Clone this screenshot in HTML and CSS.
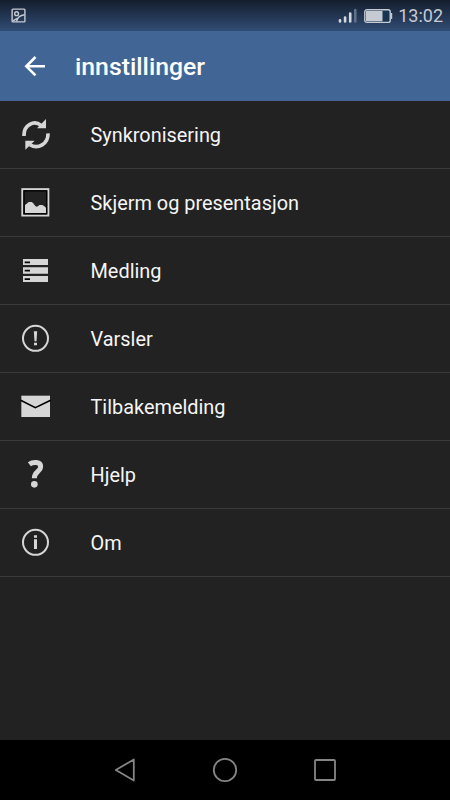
FILE: index.html
```html
<!DOCTYPE html>
<html lang="nb">
<head>
<meta charset="utf-8">
<title>innstillinger</title>
<link rel="stylesheet" href="styles.css">
</head>
<body>
<div class="screen">
  <div class="status">
    <svg class="status-photo" width="16" height="16" viewBox="0 0 16 16"><rect x="1.1" y="1.1" width="12.8" height="12.8" rx=".8"/><circle cx="5.6" cy="5.7" r="1.9"/><path d="M5.5 13.5C6.3 10 8.8 7.3 13.5 6.8M2 12.8L6.3 10.3"/></svg>
    <svg class="signal" width="20" height="16" viewBox="0 0 20 16"><path d="M2 13.500V12.300M7.100 13.500V9.500M12.200 13.500V5.500"/><path class="dim" d="M17.300 13.500V2"/></svg>
    <svg class="battery" width="29" height="15" viewBox="0 0 29 15"><rect class="shell" x=".8" y=".8" width="25.4" height="12.6" rx="2"/><rect class="level" x="2" y="2" width="16.5" height="10.3"/><path class="level" d="M26.5 4h1.7v6h-1.7z"/></svg>
    <span class="clock">13:02</span>
  </div>
  <header class="bar">
    <svg class="back" width="22" height="22" viewBox="0 0 22 22"><path d="M21 11.3H2.5M11.5 2L2.3 11.3L11.5 20.4"/></svg>
    <h1>innstillinger</h1>
  </header>
  <ul class="list">
    <li><svg viewBox="0 0 150 150"><path class="sync" d="M42 78V75C42 45 72 29 93 46M114 70C115 101 84 120 60 104"/><path class="fill" d="M108 27V55H81ZM46 92H74L46 119Z"/></svg><span>Synkronisering</span></li>
    <li><svg viewBox="0 0 150 150"><rect class="frame" x="37" y="33.5" width="78" height="79"/><rect class="inset" x="42" y="38.5" width="68" height="69"/><path class="fill" d="M45 105V81L52 76L56 72H65L70 76L74 82L79 86L84 85L88 81H97L103 85L108 89V105Z"/></svg><span>Skjerm og presentasjon</span></li>
    <li><svg viewBox="0 0 150 150"><path class="fill" d="M39 39H114V57H39ZM39 64H114V83H39ZM39 90H114V108H39Z"/><path class="slot" d="M44 49H60M44 74H60M44 99.5H60"/></svg><span>Medling</span></li>
    <li><svg viewBox="0 0 150 150"><circle class="ring" cx="76.5" cy="73" r="37.5"/><path class="fill" d="M71.5 52H81.5L79.5 82H73.5ZM72 86H81V94H72Z"/></svg><span>Varsler</span></li>
    <li><svg viewBox="0 0 150 150"><rect class="fill" x="34" y="41" width="86" height="64"/><path class="flap" d="M32 55L76 77L122 55"/></svg><span>Tilbakemelding</span></li>
    <li><svg viewBox="0 0 150 150"><path class="query" d="M58 43C70 34 92 35 92 50C92 65 73 64 73 85"/><circle class="fill" cx="73" cy="103" r="10"/></svg><span>Hjelp</span></li>
    <li><svg viewBox="0 0 150 150"><circle class="ring" cx="76.5" cy="73" r="37.5"/><path class="fill" d="M72 52H81V59H72ZM72 64H81V93H72Z"/></svg><span>Om</span></li>
  </ul>
  <nav class="nav">
    <svg viewBox="0 0 30 30"><path d="M23.8 4.5V25.5L5.8 15Z"/></svg>
    <svg viewBox="0 0 30 30"><circle cx="15" cy="15" r="11.2"/></svg>
    <svg viewBox="0 0 30 30"><rect x="5" y="5" width="20" height="20" rx="1"/></svg>
  </nav>
</div>
</body>
</html>
```
FILE: styles.css
```css
* { box-sizing: border-box; }
body { margin: 0; background: #222; font-family: Roboto, sans-serif; color: #f5f5f5; }
.screen { width: 450px; height: 800px; display: flex; flex-direction: column; background: #222; }
svg { flex: none; fill: none; }

.status {
  height: 31px; display: flex; align-items: center; padding: 1px 7px 0 11px;
  background: linear-gradient(#141d2d, #314d75);
}
.status-photo { stroke: #c6cad2; stroke-width: 1.4; margin-right: auto; }
.signal { stroke: #d3d7de; stroke-width: 2.6; stroke-linecap: round; margin-right: 6px; }
.signal .dim { stroke: #61708a; }
.battery { margin-right: 5px; }
.battery .shell { stroke: #c6cad2; stroke-width: 1.4; fill: #183453; }
.battery .level { fill: #c6cad2; }
.clock { font-size: 18px; line-height: 20px; color: #c6cad2; }

.bar { height: 70px; display: flex; align-items: center; padding-left: 24px; background: #416696; }
.back { stroke: #fff; stroke-width: 2.6; margin-right: 29px; }
h1 { margin: 2px 0 0; font-size: 24.8px; line-height: 30px; font-weight: 500; color: #fff; }

.list { flex: 1; margin: 0; padding: 0; list-style: none; }
.list li {
  height: 68px; display: flex; align-items: center; padding: 1px 0 0 10px;
  border-bottom: 1px solid #3b3b3b; font-size: 19.9px; line-height: 24px;
}
.list svg { width: 50px; height: 50px; margin-right: 30.5px; }
.list span { padding-top: 2px; }
.fill { fill: #d6d6d6; }
.sync { stroke: #d6d6d6; stroke-width: 11; }
.frame { stroke: #d6d6d6; stroke-width: 6; }
.inset { stroke: #000; stroke-width: 4; }
.slot { stroke: #050505; stroke-width: 5; }
.ring { stroke: #d6d6d6; stroke-width: 6; }
.flap { stroke: #000; stroke-width: 5; }
.query { stroke: #d6d6d6; stroke-width: 15; }

.nav { height: 60px; display: flex; justify-content: center; align-items: center; gap: 70px; background: #000; }
.nav svg { width: 30px; height: 30px; stroke: #858585; stroke-width: 1.8; stroke-linejoin: round; }
```
